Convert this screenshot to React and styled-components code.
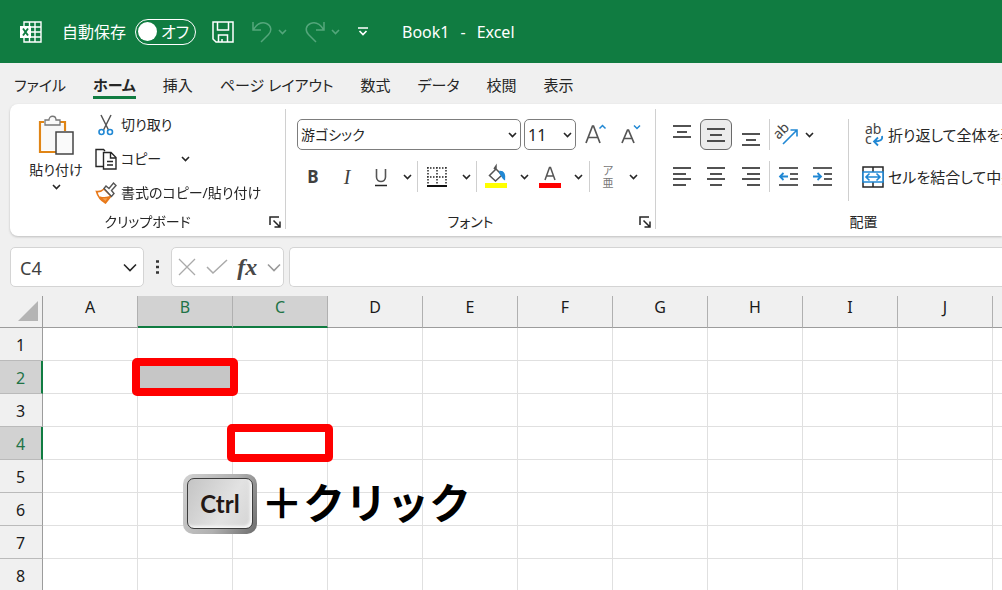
import { useState } from 'react'
import styled, { createGlobalStyle, css } from 'styled-components'

const GlobalStyle = createGlobalStyle`
  * {
    box-sizing: border-box;
  }

  body {
    margin: 0;
    background: #f0f0f0;
    color: #262626;
    font: 16px/20px 'Noto Sans', 'Noto Sans CJK JP', sans-serif;
    font-feature-settings: 'palt';
  }

  button, input, select {
    font: inherit;
    font-feature-settings: inherit;
    color: inherit;
    margin: 0;
  }

  svg {
    display: block;
    flex: none;
    overflow: visible;
  }
`

const Window = styled.div`
  height: 100vh;
  display: flex;
  flex-direction: column;
  overflow: hidden;
  white-space: nowrap;
`

const PlainButton = styled.button`
  display: flex;
  align-items: center;
  justify-content: ${props => props.$start ? 'flex-start' : 'center'};
  flex: none;
  gap: 4px;
  padding: 0;
  border: 0;
  background: none;
  cursor: pointer;
`

/* title bar */

const TitleBar = styled.header`
  display: flex;
  align-items: center;
  flex: none;
  height: 63px;
  padding-left: 19px;
  background: #107c41;
  color: #fff;
`

const AutoSave = styled.label`
  display: flex;
  align-items: center;
  gap: 9px;
  margin: 0 16px 0 20px;
`

const Switch = styled.span`
  display: flex;
  align-items: center;
  justify-content: space-between;
  width: 61px;
  height: 26px;
  padding: 0 6px 0 2px;
  border: 1px solid #fff;
  border-radius: 13px;
`

const SwitchKnob = styled.input`
  appearance: none;
  width: 19px;
  height: 19px;
  border-radius: 50%;
  background: #fff;
`

const QuickAccess = styled.div`
  display: flex;
  align-items: center;
  gap: 18px;
`

const HistoryGroup = styled.div`
  display: flex;
  align-items: center;
  gap: 6px;
  color: #54a67b;
`

const DocumentTitle = styled.h1`
  display: flex;
  gap: 11px;
  margin: 0 0 0 34px;
  font-size: 16px;
  font-weight: 400;
`

/* tabs */

const Tabs = styled.nav`
  display: flex;
  align-items: center;
  flex: none;
  gap: 27px;
  height: 41px;
  padding: 0 14px;
  font-size: 15px;
`

const Tab = styled.a`
  height: 30px;
  padding-top: 6px;
  border-bottom: 3px solid ${props => props.$active ? '#107c41' : 'transparent'};
  font-weight: ${props => props.$active ? 700 : 400};
  color: inherit;
  text-decoration: none;
`

/* ribbon */

const RibbonShadow = styled.div`
  flex: none;
  filter: drop-shadow(0 1px 1px #bdbdbd);
`

const Ribbon = styled.div`
  display: flex;
  height: 132px;
  margin-left: 10px;
  padding: 5px 0 7px;
  overflow: hidden;
  border-radius: 8px 0 0 8px;
  background: #fff;
`

const Group = styled.section`
  display: flex;
  flex-direction: column;
  justify-content: space-between;
  flex: none;
  width: ${props => props.$width}px;
  border-right: 1px solid #d0d0d0;
  font-size: 14px;
`

const GroupBody = styled.div`
  display: flex;
  padding: ${props => props.$padding};
`

const GroupFooter = styled.div`
  display: grid;
  grid-template-columns: 20px 1fr 20px;
  align-items: center;
  height: 14px;
  line-height: 14px;
  text-align: center;

  & > span {
    grid-column: 2;
  }
`

const PasteButton = styled(PlainButton)`
  flex-direction: column;
  width: 56px;
  height: 88px;
`

const CommandList = styled.div`
  padding-left: 11px;
`

const CommandRow = styled.div`
  display: flex;
  align-items: center;
  gap: 20px;
  height: ${props => props.$height}px;
`

const Stack = styled.div`
  display: flex;
  flex-direction: column;
  gap: 11px;
`

const ToolRow = styled.div`
  display: flex;
  align-items: center;
  height: 31px;
  gap: ${props => props.$gap || 0}px;
`

const Tool = styled(PlainButton)`
  width: ${props => props.$width || 34}px;
  height: 31px;
  ${props => props.$pressed && css`
    border: 1px solid #6a6a6a;
    border-radius: 6px;
    background: #ececec;
  `}
`

const Letter = styled.span`
  font-weight: ${props => props.$bold ? 700 : 400};
  font-style: ${props => props.$italic ? 'italic' : 'normal'};
  font-family: ${props => props.$italic ? "'Liberation Serif', serif" : 'inherit'};
  font-size: ${props => props.$italic ? 20 : 17}px;
  color: #404040;
`

const Ruby = styled.span`
  display: flex;
  flex-direction: column;
  align-items: center;
  color: #777;
  font-size: 11px;
  line-height: 12px;
`

const Divider = styled.span`
  flex: none;
  width: 1px;
  height: ${props => props.$height || 31}px;
  background: #cfcfcf;
`

const WrapCommands = styled.div`
  display: flex;
  gap: 13px;
  padding-left: 10px;
  font-size: 15px;
`

const SelectBox = styled.label`
  display: grid;
  align-items: center;
  width: ${props => props.$width}px;
  height: 31px;

  select {
    grid-area: 1 / 1;
    appearance: none;
    width: 100%;
    height: 31px;
    padding: 0 20px 0 3px;
    border: 1px solid #7d7d7d;
    border-radius: 5px;
    background: #fff;
    font-size: ${props => props.$fontSize}px;
  }

  svg {
    grid-area: 1 / 1;
    justify-self: end;
    margin-right: 4px;
    pointer-events: none;
  }
`

/* formula bar */

const FormulaBar = styled.div`
  display: flex;
  align-items: center;
  flex: none;
  height: 60px;
  padding: 2px 0 0 10px;
`

const FieldBox = styled.div`
  display: flex;
  align-items: center;
  justify-content: space-between;
  flex: ${props => props.$width ? 'none' : 1};
  width: ${props => props.$width ? `${props.$width}px` : 'auto'};
  height: 40px;
  padding: 0 ${props => props.$tight ? 2 : 6}px;
  border: 1px solid #d4d4d4;
  border-radius: ${props => props.$open ? '5px 0 0 5px' : '5px'};
  border-right-width: ${props => props.$open ? 0 : 1}px;
  background: #fff;
`

const Field = styled.input`
  flex: 1;
  min-width: 0;
  padding: 2px 0 0 3px;
  border: 0;
  outline: 0;
  background: none;
  font-size: 18px;
  color: #404040;
`

const Grip = styled.span`
  display: flex;
  justify-content: center;
  width: 27px;
`

const FormulaButtons = styled.div`
  display: flex;
  align-items: center;
  justify-content: space-between;
  width: 100%;
  padding-left: 4px;
`

const Fx = styled.span`
  font: italic 700 24px/30px 'Liberation Serif', serif;
  color: #484848;
`

const Muted = styled.span`
  color: #999;
`

const Spacer = styled.span`
  width: 5px;
`

/* sheet */

const SheetArea = styled.main`
  position: relative;
  flex: 1;
  min-height: 0;
  overflow: hidden;
  background: #fff;
`

const Sheet = styled.table`
  width: 100%;
  table-layout: fixed;
  border-collapse: separate;
  border-spacing: 0;
`

const Corner = styled.th`
  width: 43px;
  padding: 0 4px 1px 0;
  border-right: 1px solid #9c9c9c;
  border-bottom: 1px solid #9c9c9c;
  background: #f0f0f0;

  svg {
    margin-left: auto;
  }
`

const ColumnHead = styled.th`
  width: ${props => props.$rest ? 'auto' : '95px'};
  height: 32px;
  padding: 0 0 9px;
  border-right: ${props => props.$rest ? 0 : '1px solid #b0b0b0'};
  border-bottom: ${props => props.$active ? '2px solid #107c41' : '1px solid #9c9c9c'};
  background: ${props => props.$active ? '#d2d2d2' : '#f0f0f0'};
  color: ${props => props.$active ? '#217346' : '#1a1a1a'};
  font-weight: 400;
`

const RowHead = styled.th`
  height: 33px;
  padding: 1px ${props => props.$active ? 0 : 1}px 0 0;
  border-right: ${props => props.$active ? '2px solid #107c41' : '1px solid #9c9c9c'};
  border-bottom: 1px solid #bababa;
  background: ${props => props.$active ? '#d2d2d2' : '#f0f0f0'};
  color: ${props => props.$active ? '#217346' : '#1a1a1a'};
  font-weight: 400;
`

const Cell = styled.td`
  position: relative;
  padding: 0;
  border-right: 1px solid #e0e0e0;
  border-bottom: 1px solid #e0e0e0;
  background: ${props => props.$filled ? '#c6c6c6' : '#fff'};

  &:last-child {
    border-right: 0;
  }
`

const Marker = styled.span`
  position: absolute;
  z-index: 1;
  inset: -3px -6px;
  border: 8px solid #f00;
  border-radius: 5px;
`

const Hint = styled.div`
  position: absolute;
  top: 178px;
  left: 183px;
  display: flex;
  gap: 4px;
  color: #000;
  font: 700 42px/54px 'Noto Sans CJK JP', sans-serif;
  font-feature-settings: normal;
`

const KeyCap = styled.kbd`
  display: block;
  padding: 4px 4px 5px;
  border-radius: 10px;
  background: linear-gradient(115deg, #d2d2d2 0%, #b0b0b0 55%, #6c6c6c 100%);
`

const KeyFace = styled.span`
  display: grid;
  place-items: center;
  width: 66px;
  height: 51px;
  border: 1px solid #3c3c3c;
  border-radius: 7px;
  background: linear-gradient(120deg, #c4c4c4, #e2e2e2 60%, #d4d4d4);
  box-shadow: inset -2px -2px 3px #f8f8f8;
  color: #231815;
  font: 700 24px/30px Lato, sans-serif;
`

/* icons */

const Icon = ({ size = 22, width = size, height = size, children }) => (
  <svg
    width={width}
    height={height}
    viewBox={`0 0 ${width} ${height}`}
    fill='none'
    stroke='currentColor'
    strokeWidth='1.3'
    aria-hidden='true'
  >
    {children}
  </svg>
)

const Chevron = ({ large }) => large ? (
  <Icon width={14} height={9}><path d='M1 1.5l6 6 6-6' strokeWidth='1.6' /></Icon>
) : (
  <Icon width={9} height={6}><path d='M1 1l3.5 3.5L8 1' strokeWidth='1.6' /></Icon>
)

const ExcelIcon = () => (
  <Icon width={23}>
    <path d='M5 5V1h17v20H5v-4M5 6h17M12 11h10M5 16h17M10.5 1v5M10.5 16v5M16 1v20' strokeWidth='1.4' />
    <path d='M1 5h11v12H1z' fill='#fff' stroke='none' />
    <path d='M4 7.5l5 7M9 7.5l-5 7' stroke='#107c41' strokeWidth='1.9' />
  </Icon>
)

const SaveIcon = () => (
  <Icon>
    <path d='M1 1h20v20H4l-3-3zM5.5 1v8h11V1M6.5 21v-7h9v7M10 21v-3' strokeWidth='1.5' />
  </Icon>
)

const UndoIcon = () => (
  <Icon width={20}>
    <path d='M1 1v8h8M1.5 8.5C5 3 10 .8 14.5 2.5c5 2 5.5 7.5 2 11L9 21' strokeWidth='1.5' />
  </Icon>
)

const RedoIcon = () => (
  <Icon width={20}>
    <path d='M19 1v8h-8M18.5 8.5C15 3 10 .8 5.5 2.5c-5 2-5.500 7.5-2 11L11 21' strokeWidth='1.5' />
  </Icon>
)

const MoreIcon = () => (
  <Icon width={10} height={9}>
    <path d='M0 1h10M1.5 4L5 7.5 8.5 4' strokeWidth='1.7' />
  </Icon>
)

const PasteIcon = () => (
  <Icon width={36} height={40}>
    <path d='M6 6H2v30h16M21 6h6v9' stroke='#e08516' strokeWidth='2.2' />
    <path d='M4 8h21v7h-8v19H4z' fill='#f8f8f8' stroke='none' />
    <path d='M7 9V4h4c0-5 7-5 7 0h4v5z' fill='#fafafa' stroke='#777' />
    <path d='M18 16h17v22H18z' fill='#fafafa' stroke='#444' strokeWidth='1.5' />
  </Icon>
)

const CutIcon = () => (
  <Icon>
    <path d='M6 1l7.500 15M16 1L8.5 16' stroke='#555' strokeWidth='1.5' />
    <circle cx='6.5' cy='18' r='2.5' stroke='#2188d4' strokeWidth='1.6' />
    <circle cx='15' cy='18' r='2.5' stroke='#2188d4' strokeWidth='1.6' />
  </Icon>
)

const CopyIcon = () => (
  <Icon>
    <path d='M8 18.500H1V1.500h7.5l1.5 1.500M8.5 4.5H16l5 5V21H8.500zM15.500 4.500V10H21M12 13.500h6M12 17h6' strokeWidth='1.4' />
  </Icon>
)

const BrushIcon = () => (
  <Icon>
    <path d='M1.5 9.5c3 .5 5.5-.5 7.5-2.5l7 7-5.5 7C7 19 3 15 1.5 9.500z' fill='#fff' stroke='#e8791a' strokeWidth='1.6' />
    <path d='M5 15c3 1 5 1 9 0l-3.500 5z' fill='#f5a04f' stroke='#e8791a' />
    <path d='M9 6.500l2-2.500 3 2.500L18.500 1 21 3.500l-4.500 5 2.500 3-2.500 3z' fill='#fff' stroke='#555' strokeWidth='1.4' />
  </Icon>
)

const LauncherIcon = () => (
  <Icon width={12} height={12}>
    <path d='M1 9V1h9M4.5 4.5l6 6M11 5.5V11H5.5' strokeWidth='1.5' />
  </Icon>
)

const FontSizeIcon = ({ down }) => (
  <Icon>
    {down
      ? <path d='M2 19L7.500 6h1L14 19M4 14.500h8' stroke='#555' strokeWidth='1.7' />
      : <path d='M1 19L7.500 2h1L15 19M3.500 13.500h9' stroke='#555' strokeWidth='1.7' />}
    <path d={down ? 'M14 1.500l3 3 3-3' : 'M14.500 4.500l3-3 3 3'} stroke='#2188d4' strokeWidth='1.5' />
  </Icon>
)

const UnderlineIcon = () => (
  <Icon width={14}>
    <path d='M2.5 3v8c0 6 9 6 9 0V3' stroke='#555' strokeWidth='1.6' />
    <path d='M1 19.500h12' strokeWidth='1.5' />
  </Icon>
)

const BorderIcon = () => (
  <Icon>
    <path d='M1 2h20M1 11h20M2 1v18M11 1v18M20 1v18' strokeWidth='1.5' strokeDasharray='1.5 1.5' />
    <path d='M1 20h20' stroke='#111' strokeWidth='2' />
  </Icon>
)

const FillIcon = () => (
  <Icon>
    <path d='M11 3l6 6-6.500 6-6-5.500zM11 4V0L9 3' stroke='#555' strokeWidth='1.5' />
    <path d='M15 5.500c4 0 5 2.500 4.500 8-2-1-2.500-4-4.500-6z' fill='#2188d4' stroke='#2188d4' />
    <path d='M0 17h22v5H0z' fill='#ff0' stroke='none' />
  </Icon>
)

const FontColorIcon = () => (
  <Icon>
    <path d='M6 14L10.500 1.500h1L16 14M7.500 10h7' stroke='#555' strokeWidth='1.5' />
    <path d='M0 17h22v5H0z' fill='#f00' stroke='none' />
  </Icon>
)

const LINES = {
  top: [[1, 0, 18], [7, 4, 14], [12, 0, 18]],
  middle: [[1, 0, 18], [7, 3, 15], [13, 0, 18]],
  left: [[1, 0, 18], [7, 0, 13], [12, 0, 18], [18, 0, 13]],
  center: [[1, 0, 18], [7, 3, 15], [12, 0, 18], [18, 3, 15]],
  right: [[1, 0, 18], [7, 5, 18], [12, 0, 18], [18, 5, 18]]
}

const AlignIcon = ({ lines, offset = 0 }) => (
  <Icon width={18} height={20}>
    {lines.map(([y, from, to]) => (
      <path key={y} d={`M${from} ${y + offset}H${to}`} strokeWidth='1.6' />
    ))}
  </Icon>
)

const IndentIcon = ({ increase }) => (
  <Icon width={20} height={20}>
    <path d='M0 1h19M11 7h8M11 12h8M0 18h19' strokeWidth='1.6' />
    <path
      d={increase ? 'M0 9.500h8M4.500 6L8 9.500 4.500 13' : 'M9 9.500H1M4.500 6L1 9.500 4.500 13'}
      stroke='#2188d4'
      strokeWidth='1.8'
    />
  </Icon>
)

const IconText = styled.text`
  font: 14px 'Noto Sans', sans-serif;
  fill: #444;
  stroke: none;
`

const OrientationIcon = () => (
  <Icon width={23}>
    <IconText x='0' y='12' transform='rotate(-45 6 11)'>ab</IconText>
    <path d='M7 20L21 6M14.500 6H21v6.500' stroke='#2188d4' strokeWidth='1.6' />
  </Icon>
)

const WrapIcon = () => (
  <Icon>
    <IconText x='3' y='10'>ab</IconText>
    <IconText x='3' y='20'>c</IconText>
    <path d='M20 12c1 4-2 5.500-8 5.500M16 13.500l-4 4 4 4' stroke='#2188d4' strokeWidth='1.8' />
  </Icon>
)

const MergeIcon = () => (
  <Icon>
    <path d='M1 1h20v20H1zM11 1v5M11 16v5' strokeWidth='1.5' />
    <path d='M1 6h20v10H1z' fill='#fff' stroke='#2188d4' strokeWidth='1.6' />
    <path d='M4 11h14M7.500 7.500L4 11l3.500 3.500M14.500 7.500L18 11l-3.500 3.500' stroke='#2188d4' strokeWidth='1.6' />
  </Icon>
)

const GroupLabel = ({ children, launcher }) => (
  <GroupFooter>
    <span>{children}</span>
    {launcher && <PlainButton aria-label={`${children}の設定`}><LauncherIcon /></PlainButton>}
  </GroupFooter>
)

const DropArrow = ({ label, width = 24 }) => (
  <Tool $width={width} aria-label={label}><Chevron /></Tool>
)

const ClipboardGroup = () => (
  <Group $width={276}>
    <GroupBody $padding='0 0 0 18px'>
      <PasteButton>
        <PasteIcon />
        <span>貼り付け</span>
        <Chevron />
      </PasteButton>
      <CommandList>
        <CommandRow $height={31}>
          <PlainButton $start><CutIcon />切り取り</PlainButton>
        </CommandRow>
        <CommandRow $height={37}>
          <PlainButton $start><CopyIcon />コピー</PlainButton>
          <PlainButton aria-label='コピーのオプション'><Chevron /></PlainButton>
        </CommandRow>
        <CommandRow $height={31}>
          <PlainButton $start><BrushIcon />書式のコピー/貼り付け</PlainButton>
        </CommandRow>
      </CommandList>
    </GroupBody>
    <GroupLabel launcher>クリップボード</GroupLabel>
  </Group>
)

const FontGroup = () => (
  <Group $width={370}>
    <GroupBody $padding='10px 0 0 11px'>
      <Stack>
        <ToolRow $gap={3}>
          <SelectBox $width={224} $fontSize={14}>
            <select aria-label='フォント名'>
              <option>游ゴシック</option>
            </select>
            <Chevron />
          </SelectBox>
          <SelectBox $width={52} $fontSize={16}>
            <select aria-label='フォント サイズ'>
              <option>11</option>
            </select>
            <Chevron />
          </SelectBox>
          <Tool $width={34} aria-label='フォント サイズの拡大'><FontSizeIcon /></Tool>
          <Tool $width={30} aria-label='フォント サイズの縮小'><FontSizeIcon down /></Tool>
        </ToolRow>
        <ToolRow>
          <Tool $width={32}><Letter $bold>B</Letter></Tool>
          <Tool $width={36}><Letter $italic>I</Letter></Tool>
          <Tool $width={32} aria-label='下線'><UnderlineIcon /></Tool>
          <DropArrow label='下線の種類' width={20} />
          <Divider />
          <Tool $width={38} aria-label='罫線'><BorderIcon /></Tool>
          <DropArrow label='罫線の種類' width={20} />
          <Divider />
          <Tool $width={38} aria-label='塗りつぶしの色'><FillIcon /></Tool>
          <DropArrow label='塗りつぶしの色の選択' width={18} />
          <Tool aria-label='フォントの色'><FontColorIcon /></Tool>
          <DropArrow label='フォントの色の選択' width={22} />
          <Divider />
          <Tool $width={36}><Ruby><span>ア</span><span>亜</span></Ruby></Tool>
          <DropArrow label='ふりがなの設定' width={14} />
        </ToolRow>
      </Stack>
    </GroupBody>
    <GroupLabel launcher>フォント</GroupLabel>
  </Group>
)

const AlignmentGroup = () => (
  <Group $width={416}>
    <GroupBody $padding='10px 0 0 10px'>
      <Stack>
        <ToolRow $gap={3}>
          <Tool $width={31} aria-label='上揃え'><AlignIcon lines={LINES.top} /></Tool>
          <Tool $width={32} $pressed aria-label='上下中央揃え'><AlignIcon lines={LINES.middle} offset={3} /></Tool>
          <Tool $width={31} aria-label='下揃え'><AlignIcon lines={LINES.top} offset={8} /></Tool>
          <Divider />
          <Tool $width={28} aria-label='方向'><OrientationIcon /></Tool>
          <DropArrow label='方向の選択' width={10} />
        </ToolRow>
        <ToolRow $gap={3}>
          <Tool $width={31} aria-label='左揃え'><AlignIcon lines={LINES.left} /></Tool>
          <Tool $width={32} aria-label='中央揃え'><AlignIcon lines={LINES.center} /></Tool>
          <Tool $width={31} aria-label='右揃え'><AlignIcon lines={LINES.right} /></Tool>
          <Divider />
          <Tool $width={31} aria-label='インデントを減らす'><IndentIcon /></Tool>
          <Tool $width={31} aria-label='インデントを増やす'><IndentIcon increase /></Tool>
        </ToolRow>
      </Stack>
      <WrapCommands>
        <Divider $height={82} />
        <Stack>
          <ToolRow><PlainButton $start><WrapIcon />折り返して全体を表示する</PlainButton></ToolRow>
          <ToolRow><PlainButton $start><MergeIcon />セルを結合して中央揃え</PlainButton></ToolRow>
        </Stack>
      </WrapCommands>
    </GroupBody>
    <GroupLabel>配置</GroupLabel>
  </Group>
)

const TABS = ['ファイル', 'ホーム', '挿入', 'ページ レイアウト', '数式', 'データ', '校閲', '表示']
const COLUMNS = ['A', 'B', 'C', 'D', 'E', 'F', 'G', 'H', 'I', 'J']
const ROWS = [1, 2, 3, 4, 5, 6, 7, 8]
const SELECTED = ['B2', 'C4']

const isSelected = part => SELECTED.some(cell => cell.includes(part))

const App = () => {
  const [autoSave, setAutoSave] = useState(false)
  const [formula, setFormula] = useState('')

  return (
    <Window>
      <GlobalStyle />
      <TitleBar>
        <ExcelIcon />
        <AutoSave>
          自動保存
          <Switch>
            <SwitchKnob type='checkbox' checked={autoSave} onChange={e => setAutoSave(e.target.checked)} />
            {autoSave ? 'オン' : 'オフ'}
          </Switch>
        </AutoSave>
        <QuickAccess>
          <PlainButton aria-label='上書き保存'><SaveIcon /></PlainButton>
          <HistoryGroup>
            <PlainButton aria-label='元に戻す'><UndoIcon /></PlainButton>
            <Chevron />
          </HistoryGroup>
          <HistoryGroup>
            <PlainButton aria-label='やり直し'><RedoIcon /></PlainButton>
            <Chevron />
          </HistoryGroup>
          <PlainButton aria-label='クイック アクセスのカスタマイズ'><MoreIcon /></PlainButton>
        </QuickAccess>
        <DocumentTitle>
          <span>Book1</span>
          <span>-</span>
          <span>Excel</span>
        </DocumentTitle>
      </TitleBar>
      <Tabs>
        {TABS.map(tab => (
          <Tab key={tab} href='#' $active={tab === 'ホーム'}>{tab}</Tab>
        ))}
      </Tabs>
      <RibbonShadow>
        <Ribbon>
          <ClipboardGroup />
          <FontGroup />
          <AlignmentGroup />
        </Ribbon>
      </RibbonShadow>
      <FormulaBar>
        <FieldBox $width={134}>
          <Field aria-label='名前ボックス' defaultValue='C4' />
          <PlainButton aria-label='名前の一覧'><Chevron large /></PlainButton>
        </FieldBox>
        <Grip>
          <Icon width={4} height={14}>
            <path d='M0 1.5h3M0 7h3M0 12.5h3' stroke='#333' strokeWidth='2.5' />
          </Icon>
        </Grip>
        <FieldBox $width={113} $tight>
          <FormulaButtons>
            <PlainButton aria-label='キャンセル'>
              <Icon width={18} height={18}><path d='M1 1l16 16M17 1L1 17' stroke='#aaa' /></Icon>
            </PlainButton>
            <PlainButton aria-label='入力'>
              <Icon width={22} height={16}><path d='M1 8l6 6L21 1' stroke='#aaa' strokeWidth='1.5' /></Icon>
            </PlainButton>
            <PlainButton aria-label='関数の挿入'><Fx>fx</Fx></PlainButton>
            <Muted><Chevron large /></Muted>
          </FormulaButtons>
        </FieldBox>
        <Spacer />
        <FieldBox $open>
          <Field aria-label='数式バー' value={formula} onChange={e => setFormula(e.target.value)} />
        </FieldBox>
      </FormulaBar>
      <SheetArea>
        <Sheet>
          <thead>
            <tr>
              <Corner>
                <Icon width={20} height={20}><path d='M20 0v20H0z' fill='#b4b4b4' stroke='none' /></Icon>
              </Corner>
              {COLUMNS.map(column => (
                <ColumnHead key={column} scope='col' $active={isSelected(column)}>{column}</ColumnHead>
              ))}
              <ColumnHead $rest />
            </tr>
          </thead>
          <tbody>
            {ROWS.map(row => (
              <tr key={row}>
                <RowHead scope='row' $active={isSelected(String(row))}>{row}</RowHead>
                {COLUMNS.map(column => (
                  <Cell key={column} $filled={column + row === 'B2'}>
                    {SELECTED.includes(column + row) && <Marker />}
                  </Cell>
                ))}
                <Cell />
              </tr>
            ))}
          </tbody>
        </Sheet>
        <Hint>
          <KeyCap><KeyFace>Ctrl</KeyFace></KeyCap>
          ＋クリック
        </Hint>
      </SheetArea>
    </Window>
  )
}

export default App
